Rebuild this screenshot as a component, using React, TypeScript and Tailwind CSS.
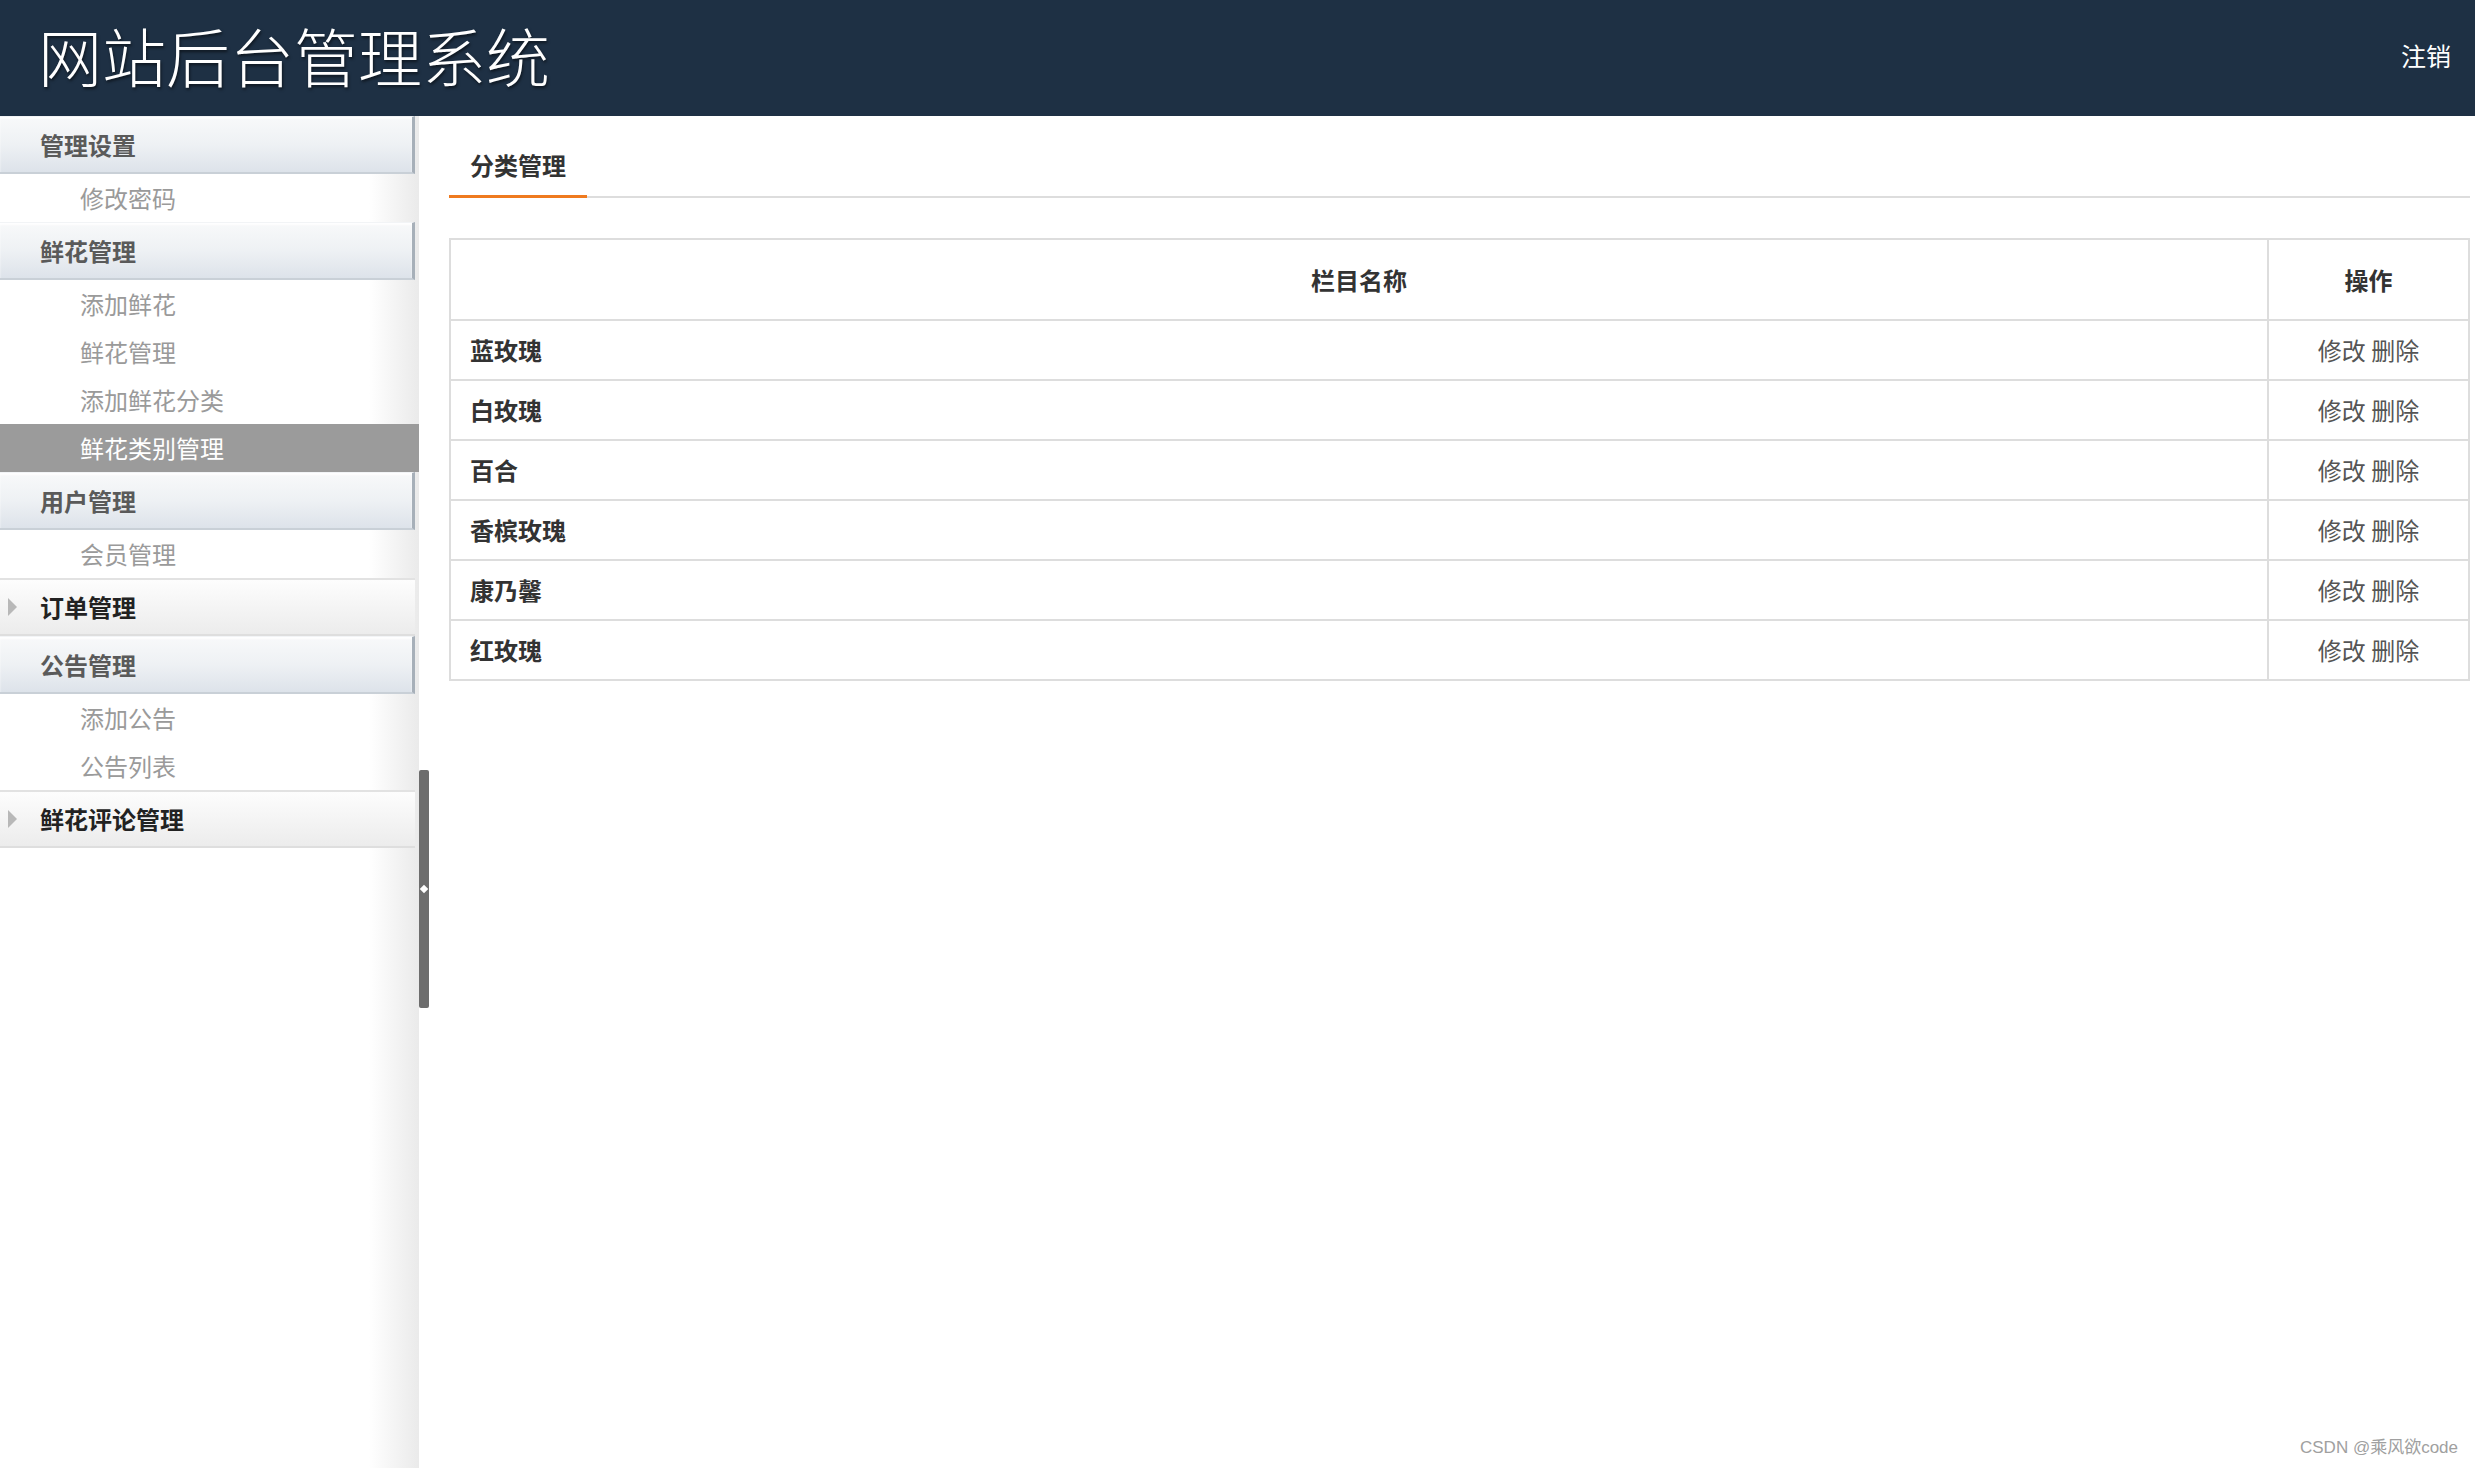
import React from "react";

const FONT = { fontFamily: '"Noto Sans CJK SC", "Noto Sans", sans-serif' };

function ExpandedHeader({ label }: { label: string }) {
  return (
    <div className="flex h-[58px] w-[415px] items-center border-t border-[#f2f4f6] border-b-2 border-b-[#c9d0d7] border-r-[3px] border-r-[#a7b0b9] bg-gradient-to-b from-[#f8f9fa] via-[#eef1f4] to-[#dde3ea] pl-[40px] text-[24px] font-bold text-[#5a5a5a] shadow-[inset_0_2px_2px_rgba(255,255,255,0.9)]">
      {label}
    </div>
  );
}

function CollapsedHeader({ label }: { label: string }) {
  return (
    <div className="flex h-[58px] w-[415px] items-center border-t-2 border-[#e2e2e2] border-b-2 border-b-[#dedede] bg-gradient-to-b from-[#fdfdfd] to-[#ececec]">
      <svg width="40" height="58" viewBox="0 0 40 58" className="shrink-0">
        <polygon points="8,20 8,38 17,29" fill="#b8b8b8" />
      </svg>
      <span className="text-[24px] font-bold text-[#222]">{label}</span>
    </div>
  );
}

function SubItem({ label, active }: { label: string; active?: boolean }) {
  return (
    <div
      className={
        active
          ? "flex h-[48px] w-[419px] items-center bg-[#9b9b9b] pl-[80px] text-[24px] text-white"
          : "flex h-[48px] w-[415px] items-center pl-[80px] text-[24px] text-[#9a9a9a]"
      }
    >
      {label}
    </div>
  );
}

const rows = ["蓝玫瑰", "白玫瑰", "百合", "香槟玫瑰", "康乃馨", "红玫瑰"];

export default function App() {
  return (
    <div className="relative flex h-[1468px] w-full flex-col overflow-hidden bg-white" style={FONT}>
      <header className="flex h-[116px] shrink-0 items-center justify-between bg-[#1e3044] pl-[38px] pr-[24px]">
        <h1 className="mb-[8px] text-[64px] font-[300] leading-none text-white [text-shadow:1px_2px_3px_rgba(0,0,0,0.55)]">
          网站后台管理系统
        </h1>
        <span className="mb-[4px] text-[25px] text-white">注销</span>
      </header>

      <div className="flex flex-1">
        <aside className="flex w-[419px] shrink-0 flex-col bg-gradient-to-r from-white from-[88%] to-[#eaeaea]">
          <ExpandedHeader label="管理设置" />
          <SubItem label="修改密码" />
          <ExpandedHeader label="鲜花管理" />
          <SubItem label="添加鲜花" />
          <SubItem label="鲜花管理" />
          <SubItem label="添加鲜花分类" />
          <SubItem label="鲜花类别管理" active />
          <ExpandedHeader label="用户管理" />
          <SubItem label="会员管理" />
          <CollapsedHeader label="订单管理" />
          <ExpandedHeader label="公告管理" />
          <SubItem label="添加公告" />
          <SubItem label="公告列表" />
          <CollapsedHeader label="鲜花评论管理" />
        </aside>

        <div className="flex w-[10px] shrink-0 flex-col pt-[654px]">
          <div className="relative flex h-[238px] w-[10px] items-center justify-center rounded-[2px] bg-[#6d6d6d]">
            <div className="h-[6px] w-[6px] rotate-45 bg-white" />
          </div>
        </div>

        <main className="flex-1 pl-[20px] pr-[5px]">
          <div className="mt-[33px] flex border-b-2 border-[#dddddd]">
            <div className="-mb-[2px] border-b-[3px] border-[#ef7a1f] px-[21px] pb-[14px] text-[24px] font-bold leading-[32px] text-[#333]">
              分类管理
            </div>
          </div>

          <table className="mt-[40px] w-full border-collapse">
            <thead>
              <tr className="h-[81px]">
                <th className="border-2 border-[#dddddd] text-center text-[24px] font-bold text-[#333]">栏目名称</th>
                <th className="w-[201px] border-2 border-[#dddddd] text-center text-[24px] font-bold text-[#333]">操作</th>
              </tr>
            </thead>
            <tbody>
              {rows.map((r) => (
                <tr key={r} className="h-[60px]">
                  <td className="border-2 border-[#dddddd] pl-[19px] text-left text-[24px] font-bold text-[#333]">{r}</td>
                  <td className="border-2 border-[#dddddd] text-center text-[24px] text-[#555]">修改 删除</td>
                </tr>
              ))}
            </tbody>
          </table>
        </main>
      </div>

      <div className="absolute bottom-[8px] right-[17px] text-[17px] text-[#a0a0a0]" style={{ fontFamily: '"Liberation Sans", "Noto Sans CJK SC", sans-serif' }}>
        CSDN @乘风欲code
      </div>
    </div>
  );
}
